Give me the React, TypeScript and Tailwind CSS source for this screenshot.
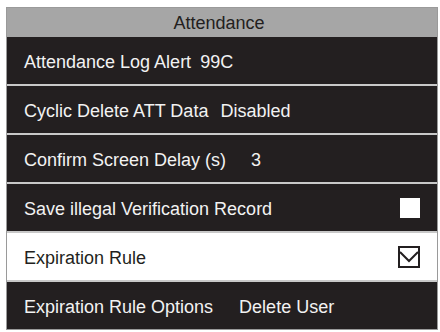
const rows: { label: string; value?: string; gap?: string; kind?: "box" | "checked" }[] = [
  { label: "Attendance Log Alert", value: "99C", gap: "ml-[9px]" },
  { label: "Cyclic Delete ATT Data", value: "Disabled", gap: "ml-[12px]" },
  { label: "Confirm Screen Delay (s)", value: "3", gap: "ml-[25px]" },
  { label: "Save illegal Verification Record", kind: "box" },
  { label: "Expiration Rule", kind: "checked" },
  { label: "Expiration Rule Options", value: "Delete User", gap: "ml-[26px]" },
];

export default function App() {
  return (
    <div className="h-[332px] w-[440px] bg-white pl-[6px] pt-[7px] font-['Liberation_Sans',Arial,sans-serif]">
      <div className="w-[432px] border border-[#9a9a9a] bg-[#9a9a9a]">
        <div className="flex h-[29px] items-center justify-center bg-[#a6a6a6] pr-[6px] pt-[1px] text-[18px] text-[#231f20]">
          Attendance
        </div>
        <div className="flex flex-col gap-[2px] bg-[#c8c8c8]">
          {rows.map((r) => {
            const selected = r.kind === "checked";
            return (
              <div
                key={r.label}
                className={
                  "flex h-[47px] items-center pl-[17px] pr-[17px] pt-[4px] text-[18px] " +
                  (selected ? "bg-white text-[#231f20]" : "bg-[#231f20] text-[#f2f2f2]")
                }
              >
                <span>{r.label}</span>
                {r.value && <span className={r.gap}>{r.value}</span>}
                {r.kind === "box" && (
                  <span className="-mt-[4px] ml-auto h-[20px] w-[20px] bg-white" />
                )}
                {r.kind === "checked" && (
                  <svg className="-mt-[4px] ml-auto" width="22" height="22" viewBox="0 0 22 22">
                    <rect x="1" y="1" width="20" height="20" fill="none" stroke="#231f20" strokeWidth="2" />
                    <path d="M2 6 L11 15 L20 6" fill="none" stroke="#231f20" strokeWidth="2" />
                  </svg>
                )}
              </div>
            );
          })}
        </div>
      </div>
    </div>
  );
}
